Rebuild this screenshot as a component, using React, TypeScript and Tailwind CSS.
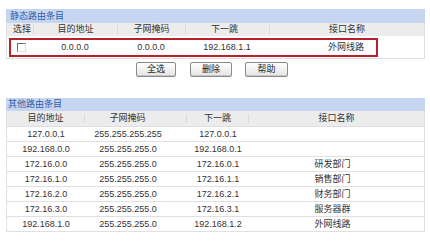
const otherRoutes = [
  ["127.0.0.1", "255.255.255.255", "127.0.0.1", ""],
  ["192.168.0.0", "255.255.255.0", "192.168.0.1", ""],
  ["172.16.0.0", "255.255.255.0", "172.16.0.1", "研发部门"],
  ["172.16.1.0", "255.255.255.0", "172.16.1.1", "销售部门"],
  ["172.16.2.0", "255.255.255.0", "172.16.2.1", "财务部门"],
  ["172.16.3.0", "255.255.255.0", "172.16.3.1", "服务器群"],
  ["192.168.1.0", "255.255.255.0", "192.168.1.2", "外网线路"],
];

function Btn({ label }: { label: string }) {
  return (
    <button className="flex h-[15px] w-full items-center justify-center rounded-[2px] border border-[#8a8a8a] bg-gradient-to-b from-white to-[#e4e4e4] text-[9px] leading-none text-[#222] shadow-[inset_0_-1px_0_#c8c8c8]">
      {label}
    </button>
  );
}

export default function App() {
  return (
    <div className="h-[251px] w-[430px] overflow-hidden bg-white pt-[9px] font-['Liberation_Sans','Noto_Sans_CJK_SC',sans-serif] text-[9px] leading-none text-[#333]">
      {/* static routes */}
      <section className="ml-[6px] mr-[5px]">
        <div className="flex h-[14px] items-center bg-[#c6d6f1] pl-[4px] text-[#2f5ea8]">
          静态路由条目
        </div>
        <div className="flex h-[13px] items-center border-x border-[#dedede] bg-[#ececec]">
          <div className="w-[27px] border-r border-[#dadada] pl-[6px]">选择</div>
          <div className="w-[84px] border-r border-[#dadada] text-center">目的地址</div>
          <div className="w-[68px] border-r border-[#dadada] text-center">子网掩码</div>
          <div className="w-[84px] border-r border-[#dadada] pr-[6px] text-center">下一跳</div>
          <div className="flex-1 text-center">接口名称</div>
        </div>
        <div className="h-[23px] border-x border-b border-[#dedede] pl-[2px] pt-[2px]">
          <div className="flex h-[19px] w-[369px] items-center border-2 border-[#b8202c]">
            <div className="w-[22px] pl-[6px]">
              <div className="h-[9px] w-[9px] border border-b-[#e0e0e0] border-l-[#707070] border-r-[#e0e0e0] border-t-[#707070] bg-white" />
            </div>
            <div className="w-[84px] text-center">0.0.0.0</div>
            <div className="w-[68px] text-center">0.0.0.0</div>
            <div className="w-[84px] text-center">192.168.1.1</div>
            <div className="flex-1 pl-[59px]">外网线路</div>
          </div>
        </div>
        <div className="mt-[3px] flex h-[15px]">
          <div className="ml-[130px] w-[40px]">
            <Btn label="全选" />
          </div>
          <div className="ml-[14px] w-[42px]">
            <Btn label="删除" />
          </div>
          <div className="ml-[13px] w-[43px]">
            <Btn label="帮助" />
          </div>
        </div>
      </section>

      {/* other routes */}
      <section className="ml-[6px] mr-[5px] mt-[21px]">
        <div className="flex h-[13px] items-center bg-[#c6d6f1] pl-[2px] text-[#2f5ea8]">
          其他路由条目
        </div>
        <div className="flex h-[16px] items-center border-x border-b border-[#dedede] bg-[#ececec]">
          <div className="w-[78px] border-r border-[#dadada] text-center">目的地址</div>
          <div className="w-[102px] border-r border-[#dadada] pr-[16px] text-center">子网掩码</div>
          <div className="w-[62px] border-r border-[#dadada] text-center">下一跳</div>
          <div className="flex-1 text-center">接口名称</div>
        </div>
        {otherRoutes.map((r) => (
          <div
            key={r[0]}
            className="flex h-[15px] items-center border-x border-b border-[#e0e0e0]"
          >
            <div className="w-[78px] text-center">{r[0]}</div>
            <div className="w-[102px] pr-[16px] text-center">{r[1]}</div>
            <div className="w-[62px] text-center">{r[2]}</div>
            <div className="flex-1 pr-[8px] text-center">{r[3]}</div>
          </div>
        ))}
      </section>
    </div>
  );
}
